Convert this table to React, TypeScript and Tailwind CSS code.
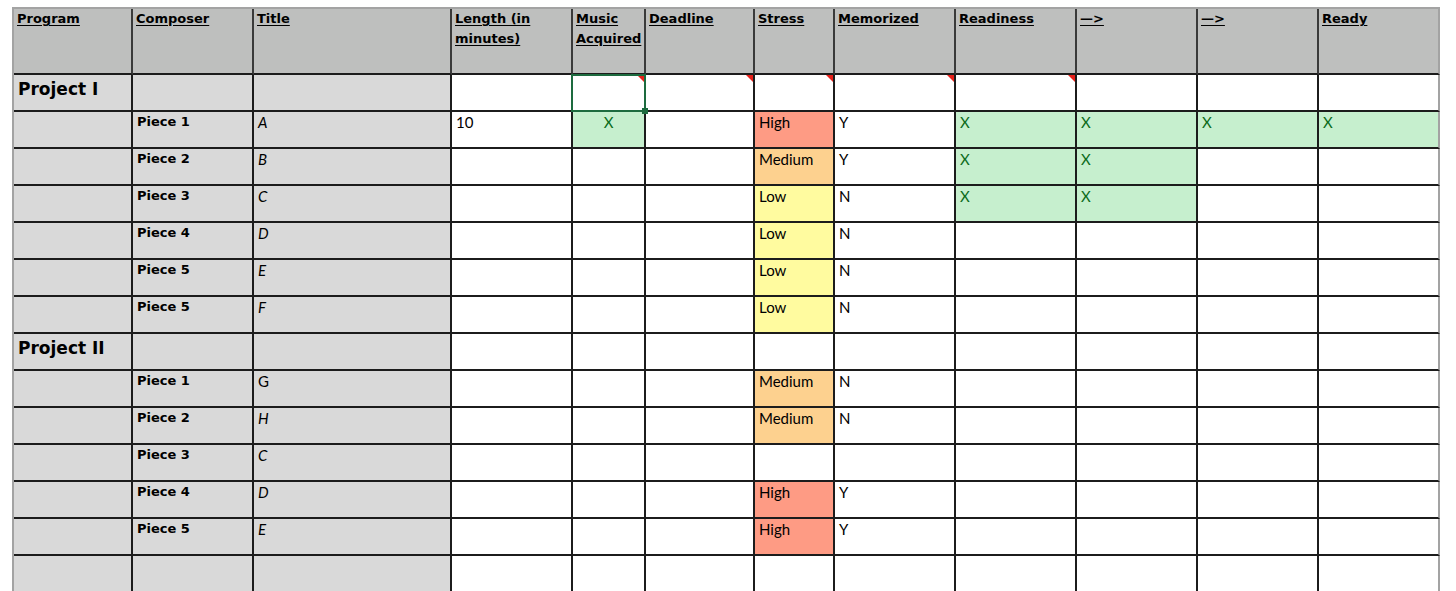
import React from 'react'

const cols = 'grid-cols-[119px_121px_198px_121px_73px_109px_80px_121px_121px_121px_121px_121px]'

const headers = ['Program', 'Composer', 'Title', 'Length (in minutes)', 'Music Acquired', 'Deadline', 'Stress', 'Memorized', 'Readiness', '—>', '—>', 'Ready']

type Fill = 'high' | 'medium' | 'low' | 'good' | undefined

const fills: Record<string, string> = {
  high: 'bg-[#fe9b84]',
  medium: 'bg-[#fdd18f]',
  low: 'bg-[#fffb9f]',
  good: 'bg-[#c6efce] text-[#0b6b1a]',
}

type Row = {
  project?: string
  piece?: string
  title?: string
  upright?: boolean
  length?: string
  music?: string
  stress?: 'High' | 'Medium' | 'Low'
  memorized?: string
  ready?: number // how many of the readiness columns are green with X
}

const rows: Row[] = [
  { project: 'Project I' },
  { piece: 'Piece 1', title: 'A', length: '10', music: 'X', stress: 'High', memorized: 'Y', ready: 4 },
  { piece: 'Piece 2', title: 'B', stress: 'Medium', memorized: 'Y', ready: 2 },
  { piece: 'Piece 3', title: 'C', stress: 'Low', memorized: 'N', ready: 2 },
  { piece: 'Piece 4', title: 'D', stress: 'Low', memorized: 'N' },
  { piece: 'Piece 5', title: 'E', stress: 'Low', memorized: 'N' },
  { piece: 'Piece 5', title: 'F', stress: 'Low', memorized: 'N' },
  { project: 'Project II' },
  { piece: 'Piece 1', title: 'G', upright: true, stress: 'Medium', memorized: 'N' },
  { piece: 'Piece 2', title: 'H', stress: 'Medium', memorized: 'N' },
  { piece: 'Piece 3', title: 'C' },
  { piece: 'Piece 4', title: 'D', stress: 'High', memorized: 'Y' },
  { piece: 'Piece 5', title: 'E', stress: 'High', memorized: 'Y' },
  {},
]

function Cell({
  children,
  gray,
  fill,
  last,
  className = '',
  comment,
  selected,
}: {
  children?: React.ReactNode
  gray?: boolean
  fill?: Fill
  last?: boolean
  className?: string
  comment?: boolean
  selected?: boolean
}) {
  const bg = fill ? fills[fill] : gray ? 'bg-[#d9d9d9]' : 'bg-white'
  return (
    <div
      className={`relative h-[37px] border-b-2 border-r-2 border-b-[#1c1c1c] px-[4px] pt-0 text-[15px] leading-[20px] whitespace-nowrap ${
        last ? 'border-r-[#a3a3a3]' : 'border-r-[#1c1c1c]'
      } ${bg} ${className}`}
    >
      {children}
      {comment && (
        <span className="absolute right-0 top-0 h-0 w-0 border-l-[7px] border-t-[7px] border-l-transparent border-t-[#e8201a]" />
      )}
      {selected && (
        <>
          <span className="absolute -left-[2px] -top-[1px] z-10 h-[38px] w-[75px] border-2 border-[#1d6b3f]" />
          <span className="absolute -bottom-[4px] -right-[4px] z-10 h-[6px] w-[6px] bg-[#1d6b3f]" />
        </>
      )}
    </div>
  )
}

const sans = { fontFamily: 'Lato, "Open Sans", sans-serif' }
const bold = 'font-bold [font-family:"DejaVu_Sans",Verdana,sans-serif]'

export default function App() {
  return (
    <div className="h-[591px] overflow-hidden bg-white pl-[12px] pt-[7px] text-black" style={sans}>
      <div className={`grid ${cols} w-fit border-l-2 border-t-2 border-[#a3a3a3]`}>
        {headers.map((h, i) => (
          <div
            key={i}
            className={`h-[66px] border-b-2 border-r-2 border-b-[#1c1c1c] bg-[#bebfbe] px-[3px] pt-0 text-[13px] leading-[20px] underline underline-offset-2 ${bold} ${
              i === headers.length - 1 ? 'border-r-[#a3a3a3]' : 'border-r-[#3a3a3a]'
            }`}
          >
            {h}
          </div>
        ))}

        {rows.map((r, ri) => {
          if (r.project) {
            return (
              <React.Fragment key={ri}>
                <Cell gray className={`!text-[17px] !pt-[2px] !leading-[24px] ${bold}`}>
                  {r.project}
                </Cell>
                <Cell gray />
                <Cell gray />
                <Cell />
                <Cell comment={ri === 0} selected={ri === 0} />
                <Cell comment={ri === 0} />
                <Cell comment={ri === 0} />
                <Cell comment={ri === 0} />
                <Cell comment={ri === 0} />
                <Cell />
                <Cell />
                <Cell last />
              </React.Fragment>
            )
          }
          const stressFill: Fill = r.stress ? (r.stress.toLowerCase() as Fill) : undefined
          const ready = r.ready ?? 0
          return (
            <React.Fragment key={ri}>
              <Cell gray />
              <Cell gray className={`!text-[13px] ${bold}`}>
                {r.piece}
              </Cell>
              <Cell gray className={r.upright ? '' : 'italic'}>
                {r.title}
              </Cell>
              <Cell>{r.length}</Cell>
              <Cell fill={r.music ? 'good' : undefined} className="text-center">
                {r.music}
              </Cell>
              <Cell />
              <Cell fill={stressFill}>{r.stress}</Cell>
              <Cell>{r.memorized}</Cell>
              {[0, 1, 2, 3].map((k) => (
                <Cell key={k} fill={k < ready ? 'good' : undefined} last={k === 3}>
                  {k < ready ? 'X' : ''}
                </Cell>
              ))}
            </React.Fragment>
          )
        })}
      </div>
    </div>
  )
}
